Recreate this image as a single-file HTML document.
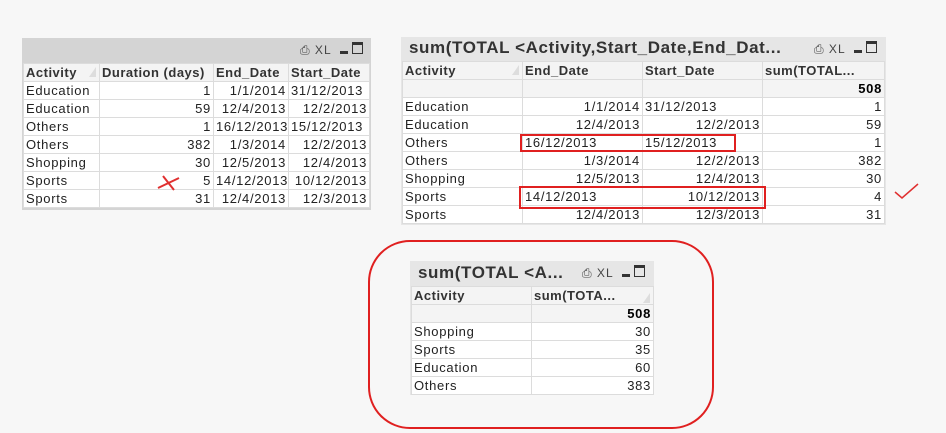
<!DOCTYPE html>
<html><head><meta charset="utf-8"><style>
body{margin:0;width:946px;height:433px;background:#f7f7f7;position:relative;overflow:hidden;font-family:"Liberation Sans","DejaVu Sans",sans-serif;font-size:13px;color:#333}
.box{position:absolute;background:#e6e6e6;}
table{position:absolute;border-collapse:collapse;table-layout:fixed;background:#fff}
td{height:17px;border:1px solid #dcdcdc;padding:0 2px;white-space:nowrap;overflow:hidden;line-height:17px;letter-spacing:0.7px;color:#222}
th{height:17px;border:1px solid #dcdcdc;padding:0 2px;background:#f4f4f4;text-align:left;font-weight:bold;white-space:nowrap;overflow:hidden;line-height:17px;position:relative;letter-spacing:0.5px}
.r{text-align:right}
.tot td{background:#f4f4f4;font-weight:bold;color:#000}
.title{position:absolute;font-weight:bold;font-size:17px;color:#333;white-space:nowrap;letter-spacing:0.6px}
.icons{position:absolute;font-size:12px;color:#444;white-space:nowrap;letter-spacing:1px}
.sort{position:absolute;right:3px;top:3px;width:0;height:0;border-left:7px solid transparent;border-bottom:10px solid #ddd}
.red{position:absolute;border:2px solid #e02020}
</style></head><body>

<!-- Table 1 -->
<div class="box" style="left:22px;top:38px;width:349px;height:172px;background:#d4d4d4"></div>
<div class="icons" style="left:300px;top:42px">⎙ XL <span style="display:inline-block;width:8px;height:3px;background:#333;margin:0 4px"></span><span style="display:inline-block;width:9px;height:8px;border:1px solid #333;border-top-width:3px"></span></div>
<table style="left:23px;top:63px;width:346px">
<col style="width:76px"><col style="width:114px"><col style="width:75px"><col style="width:81px">
<tr><th>Activity<span class="sort"></span></th><th>Duration (days)</th><th>End_Date</th><th>Start_Date</th></tr>
<tr><td>Education</td><td class="r">1</td><td class="r">1/1/2014</td><td>31/12/2013</td></tr>
<tr><td>Education</td><td class="r">59</td><td class="r">12/4/2013</td><td class="r">12/2/2013</td></tr>
<tr><td>Others</td><td class="r">1</td><td>16/12/2013</td><td>15/12/2013</td></tr>
<tr><td>Others</td><td class="r">382</td><td class="r">1/3/2014</td><td class="r">12/2/2013</td></tr>
<tr><td>Shopping</td><td class="r">30</td><td class="r">12/5/2013</td><td class="r">12/4/2013</td></tr>
<tr><td>Sports</td><td class="r">5</td><td>14/12/2013</td><td class="r">10/12/2013</td></tr>
<tr><td>Sports</td><td class="r">31</td><td class="r">12/4/2013</td><td class="r">12/3/2013</td></tr>
</table>
<svg style="position:absolute;left:155px;top:172px" width="30" height="22"><path d="M3 16 L24 6 M8 4 L19 18" stroke="#e03030" stroke-width="2" fill="none"/></svg>

<!-- Table 2 -->
<div class="box" style="left:401px;top:37px;width:485px;height:188px"></div>
<div class="title" style="left:409px;top:38px">sum(TOTAL &lt;Activity,Start_Date,End_Dat...</div>
<div class="icons" style="left:814px;top:41px">⎙ XL <span style="display:inline-block;width:8px;height:3px;background:#333;margin:0 4px"></span><span style="display:inline-block;width:9px;height:8px;border:1px solid #333;border-top-width:3px"></span></div>
<table style="left:402px;top:61px;width:482px">
<col style="width:120px"><col style="width:120px"><col style="width:120px"><col style="width:122px">
<tr><th>Activity<span class="sort"></span></th><th>End_Date</th><th>Start_Date</th><th>sum(TOTAL...</th></tr>
<tr class="tot"><td></td><td></td><td></td><td class="r">508</td></tr>
<tr><td>Education</td><td class="r">1/1/2014</td><td>31/12/2013</td><td class="r">1</td></tr>
<tr><td>Education</td><td class="r">12/4/2013</td><td class="r">12/2/2013</td><td class="r">59</td></tr>
<tr><td>Others</td><td>16/12/2013</td><td>15/12/2013</td><td class="r">1</td></tr>
<tr><td>Others</td><td class="r">1/3/2014</td><td class="r">12/2/2013</td><td class="r">382</td></tr>
<tr><td>Shopping</td><td class="r">12/5/2013</td><td class="r">12/4/2013</td><td class="r">30</td></tr>
<tr><td>Sports</td><td>14/12/2013</td><td class="r">10/12/2013</td><td class="r">4</td></tr>
<tr><td>Sports</td><td class="r">12/4/2013</td><td class="r">12/3/2013</td><td class="r">31</td></tr>
</table>
<div class="red" style="left:520px;top:134px;width:212px;height:14px"></div>
<div class="red" style="left:519px;top:186px;width:243px;height:19px"></div>
<svg style="position:absolute;left:892px;top:180px" width="30" height="22"><path d="M3 12 L10 18 L26 4" stroke="#e03030" stroke-width="1.5" fill="none"/></svg>

<!-- Red rounded frame -->
<div style="position:absolute;left:368px;top:240px;width:342px;height:185px;border:2px solid #e02020;border-radius:42px"></div>

<!-- Table 3 -->
<div class="box" style="left:410px;top:261px;width:244px;height:134px"></div>
<div class="title" style="left:418px;top:263px">sum(TOTAL &lt;A...</div>
<div class="icons" style="left:582px;top:265px">⎙ XL <span style="display:inline-block;width:8px;height:3px;background:#333;margin:0 4px"></span><span style="display:inline-block;width:9px;height:8px;border:1px solid #333;border-top-width:3px"></span></div>
<table style="left:411px;top:286px;width:242px">
<col style="width:120px"><col style="width:122px">
<tr><th>Activity</th><th>sum(TOTA...<span class="sort" style="top:6px"></span></th></tr>
<tr class="tot"><td></td><td class="r">508</td></tr>
<tr><td>Shopping</td><td class="r">30</td></tr>
<tr><td>Sports</td><td class="r">35</td></tr>
<tr><td>Education</td><td class="r">60</td></tr>
<tr><td>Others</td><td class="r">383</td></tr>
</table>
</body></html>
